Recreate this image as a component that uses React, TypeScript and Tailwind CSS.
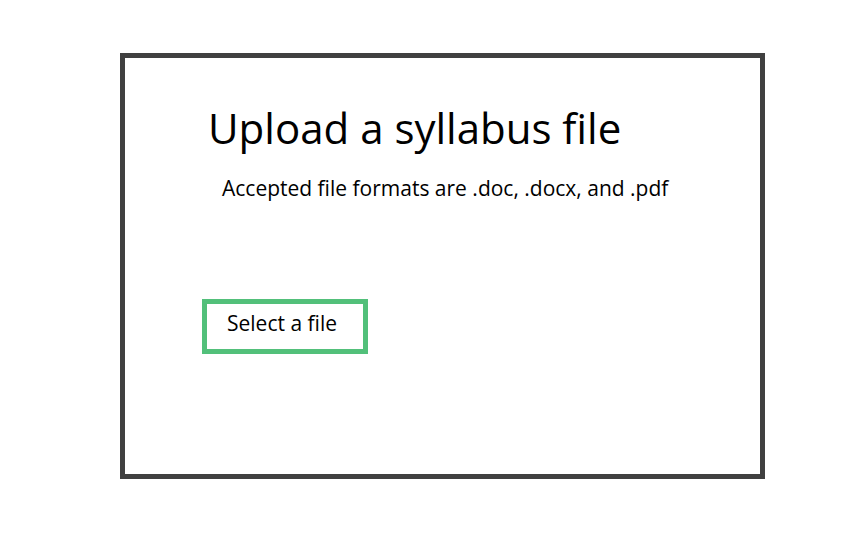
export default function App() {
  return (
    <div className="w-[864px] h-[540px] bg-white pl-[120px] pt-[53px]" style={{ fontFamily: '"Open Sans", sans-serif' }}>
      <div className="w-[645px] h-[426px] border-[5px] border-[#404040] flex flex-col">
        <h1 className="ml-[83px] mt-[44px] text-[42px] leading-[52px] text-black">Upload a syllabus file</h1>
        <p className="ml-[97px] mt-[20px] text-[21px] leading-[28px] text-black">Accepted file formats are .doc, .docx, and .pdf</p>
        <button className="ml-[77px] mt-[97px] w-[166px] h-[55px] border-[5px] border-[#52c07a] text-left pl-[20px] pb-[6px] text-[21px] text-black">
          Select a file
        </button>
      </div>
    </div>
  )
}
